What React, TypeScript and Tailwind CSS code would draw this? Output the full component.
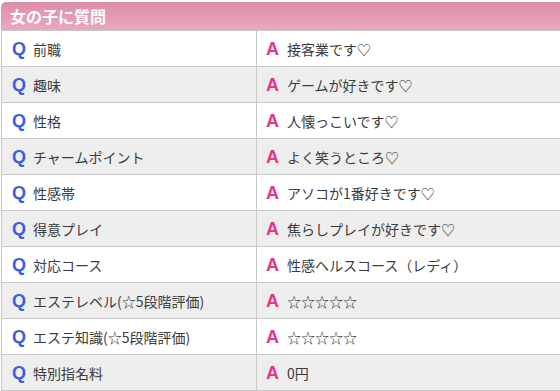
import React from "react";

const rows: [string, string][] = [
  ["前職", "接客業です♡"],
  ["趣味", "ゲームが好きです♡"],
  ["性格", "人懐っこいです♡"],
  ["チャームポイント", "よく笑うところ♡"],
  ["性感帯", "アソコが1番好きです♡"],
  ["得意プレイ", "焦らしプレイが好きです♡"],
  ["対応コース", "性感ヘルスコース（レディ）"],
  ["エステレベル(☆5段階評価)", "☆☆☆☆☆"],
  ["エステ知識(☆5段階評価)", "☆☆☆☆☆"],
  ["特別指名料", "0円"],
];

export default function App() {
  return (
    <div
      className="w-[560px] h-[391px] overflow-hidden bg-white pt-[2px] pl-[1px]"
      style={{ fontFamily: '"Noto Sans CJK JP", "Noto Sans", sans-serif' }}
    >
      <div className="w-[620px]">
        <div className="h-[28px] rounded-t-[5px] bg-gradient-to-b from-[#dd8ea7] to-[#eaa8bc] flex items-center pl-[9px]">
          <span className="text-white font-bold text-[16px] leading-none">女の子に質問</span>
        </div>
        <div className="border-l border-b border-[#c8c8c8]">
          {rows.map(([q, a], i) => (
            <div
              key={i}
              className={`flex h-[36px] border-t border-[#c8c8c8] ${i % 2 === 1 ? "bg-[#eeeeee]" : "bg-white"}`}
            >
              <div className="w-[255px] border-r border-[#c8c8c8] flex items-center pl-[10px]">
                <span
                  className="text-[#3a5fdc] font-bold text-[18px] w-[21px] leading-none"
                  style={{ fontFamily: '"Liberation Sans", Arial, sans-serif' }}
                >
                  Q
                </span>
                <span className="text-[#3c3c3c] text-[14px] leading-none">{q}</span>
              </div>
              <div className="flex-1 flex items-center pl-[9px]">
                <span
                  className="text-[#e5348d] font-bold text-[18px] w-[21px] leading-none"
                  style={{ fontFamily: '"Liberation Sans", Arial, sans-serif' }}
                >
                  A
                </span>
                <span className="text-[#3c3c3c] text-[14px] leading-none">{a}</span>
              </div>
            </div>
          ))}
        </div>
      </div>
    </div>
  );
}
